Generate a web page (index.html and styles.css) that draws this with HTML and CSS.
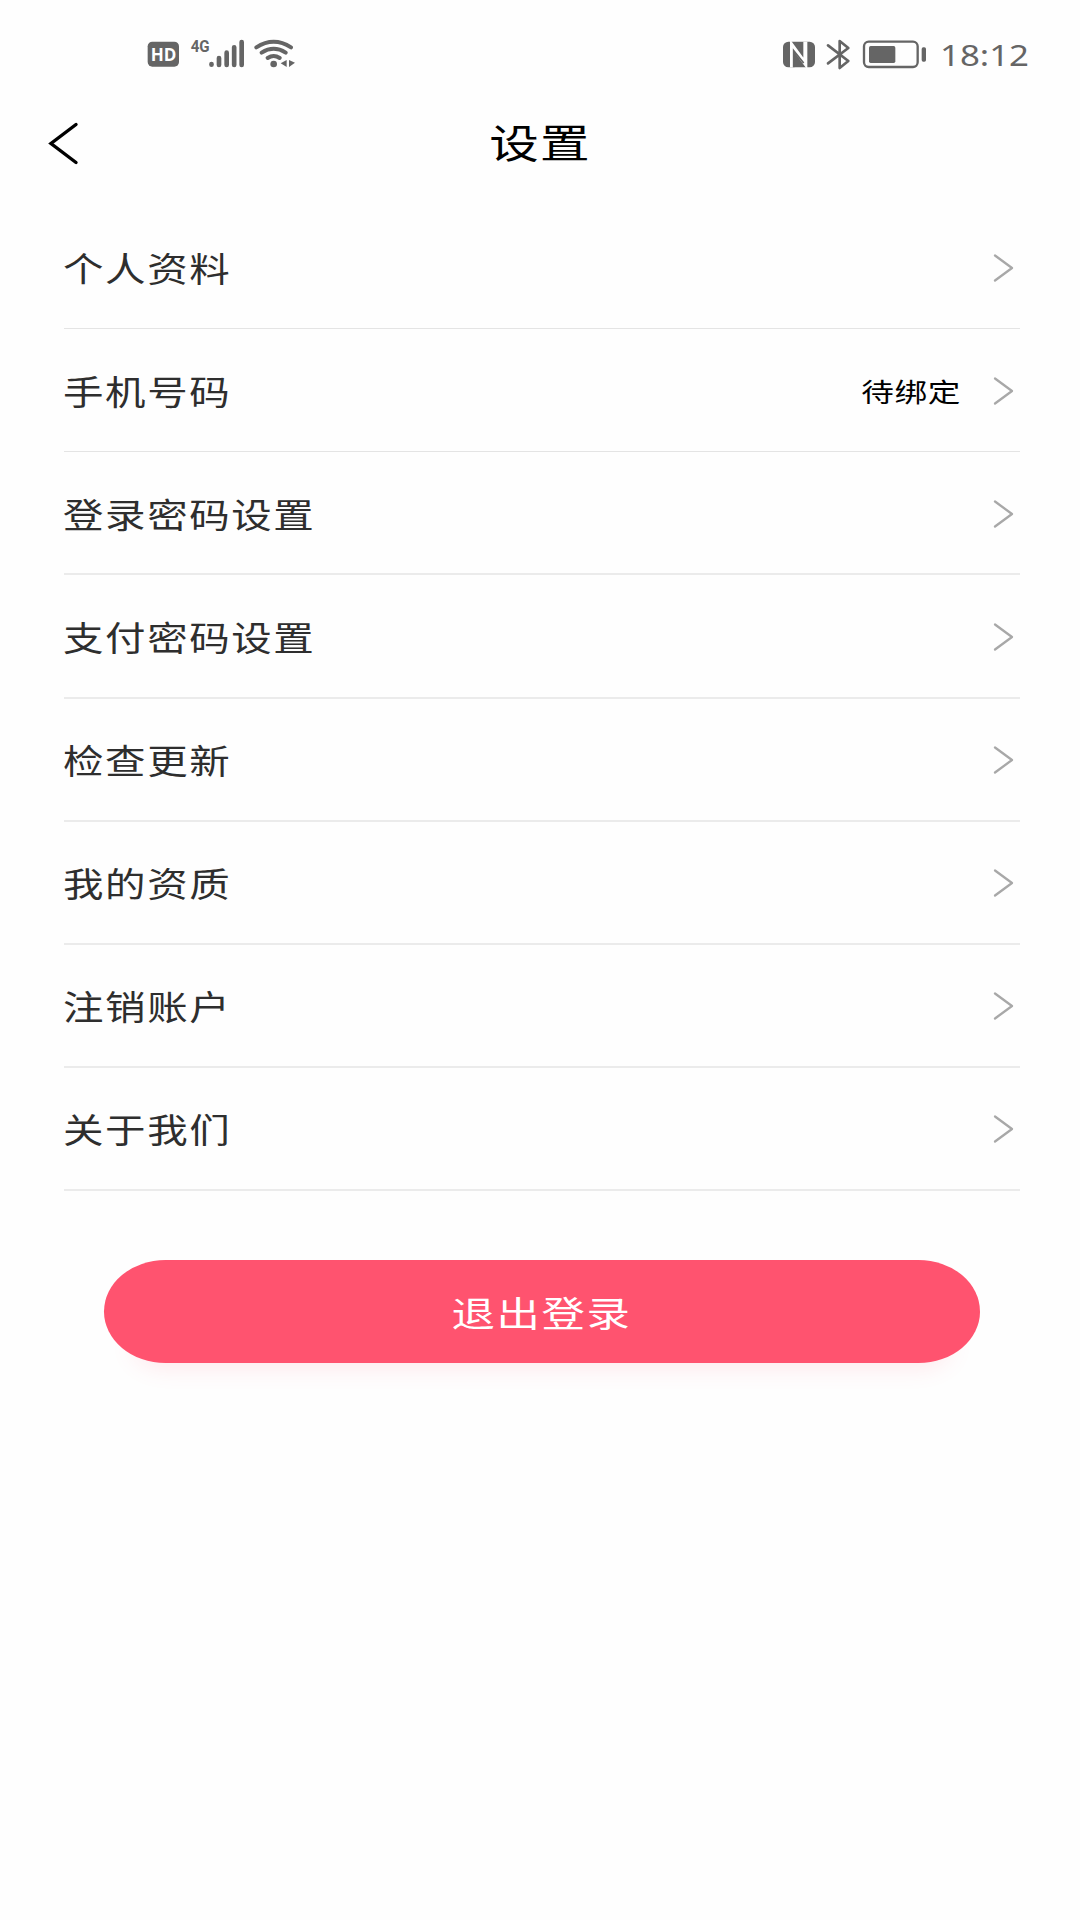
FILE: index.html
```html
<!DOCTYPE html>
<html lang="zh-CN">
<head>
<meta charset="utf-8">
<title>设置</title>
<link rel="stylesheet" href="styles.css">
</head>
<body>
<svg class="defs" width="0" height="0" aria-hidden="true">
  <symbol id="chevron" viewBox="0 0 22 30"><path d="M2 2.500L19 15L2 27.500" fill="none" stroke="#a8a8a8" stroke-width="2.300" stroke-linecap="round" stroke-linejoin="round"/></symbol>
</svg>
<div class="status">
  <svg class="status-left" viewBox="0 0 540 180">
    <rect x="53" y="50" width="94" height="75" rx="14"/>
    <text class="hd" x="62" y="107" textLength="77" lengthAdjust="spacingAndGlyphs">HD</text>
    <text class="net" x="182" y="82" textLength="57" lengthAdjust="spacingAndGlyphs">4G</text>
    <g class="line bars"><path d="M244.500 117V119M267 99V120M290 83V120M312.500 67V120M335 51V120"/></g>
    <g class="line waves"><path d="M379 67Q431 34 483 67M395 83Q431 60 467 83M413 99Q431 87 449 99"/></g>
    <circle cx="431" cy="117" r="10"/>
    <path d="M470 105V126L452 115ZM477 105V126L495 113Z"/>
  </svg>
  <div class="status-right">
    <svg class="status-icons" viewBox="0 0 480 180">
      <rect x="39" y="50" width="96" height="77" rx="16"/>
      <path class="nfc-outer" d="M66 127V61L106 116V50"/>
      <path class="nfc-inner" d="M71 127V77L101 114"/>
      <path class="line bt" d="M174 61L235 108L209 129V48L235 69L174 115"/>
      <rect class="line case" x="282" y="50" width="161" height="76" rx="14"/>
      <rect x="297" y="63" width="79" height="51" rx="5"/>
      <rect x="455" y="67" width="13" height="43" rx="5"/>
    </svg>
    <span class="time">18:12</span>
  </div>
</div>
<header class="header">
  <svg class="back" viewBox="0 0 32 44"><path d="M28 2.500L3 21.500L28 40.500" fill="none" stroke="#000" stroke-width="3.400" stroke-linecap="round" stroke-linejoin="miter"/></svg>
  <h1 class="title"><span>设置</span></h1>
</header>
<ul class="list">
  <li class="row"><span class="label">个人资料</span><svg class="arrow"><use href="#chevron"/></svg></li>
  <li class="row"><span class="label">手机号码</span><span class="value">待绑定</span><svg class="arrow"><use href="#chevron"/></svg></li>
  <li class="row"><span class="label">登录密码设置</span><svg class="arrow"><use href="#chevron"/></svg></li>
  <li class="row"><span class="label">支付密码设置</span><svg class="arrow"><use href="#chevron"/></svg></li>
  <li class="row"><span class="label">检查更新</span><svg class="arrow"><use href="#chevron"/></svg></li>
  <li class="row"><span class="label">我的资质</span><svg class="arrow"><use href="#chevron"/></svg></li>
  <li class="row"><span class="label">注销账户</span><svg class="arrow"><use href="#chevron"/></svg></li>
  <li class="row"><span class="label">关于我们</span><svg class="arrow"><use href="#chevron"/></svg></li>
</ul>
<button class="logout"><span>退出登录</span></button>
</body>
</html>
```
FILE: styles.css
```css
* { box-sizing: border-box; }

body {
  margin: 0;
  width: 1080px;
  height: 1920px;
  overflow: hidden;
  background: #fefefe;
  font-family: "Noto Sans CJK SC", sans-serif;
  display: flex;
  flex-direction: column;
}

.defs { display: block; flex: none; height: 0; }

.status {
  height: 85px;
  padding: 25px 50px 0 130px;
  display: flex;
  justify-content: space-between;
  fill: #656565;
}
.status-left { width: 180px; height: 60px; }
.status-right { display: flex; width: 260px; }
.status-icons { width: 160px; height: 60px; flex: none; }
.hd { font: 700 51px "Open Sans", sans-serif; fill: #fff; }
.net { font: 700 51px "Roboto", sans-serif; }
.line { fill: none; stroke: #656565; stroke-linecap: round; stroke-linejoin: round; }
.bars { stroke-width: 14px; }
.waves { stroke-width: 12px; }
.bt { stroke-width: 8px; }
.case { stroke-width: 7px; }
.nfc-outer { fill: none; stroke: #fefefe; stroke-width: 12px; }
.nfc-inner { fill: none; stroke: #656565; stroke-width: 5px; }
.time {
  margin-left: 10px;
  font: 400 29.5px/60px "Noto Sans", sans-serif;
  height: 60px;
  color: #656565;
  transform: scaleX(1.18);
  transform-origin: left;
}

.header {
  height: 121.3px;
  padding: 37px 48px 0;
  display: grid;
  grid-template-columns: 32px 1fr 32px;
  align-items: start;
}
.back { width: 32px; height: 44px; }
.title {
  margin: -3px 0 0;
  text-align: center;
  font-weight: 400;
  font-size: 40px;
  line-height: 44px;
  letter-spacing: 1px;
  color: #000;
}
.title span { display: inline-block; transform: scaleX(1.24); }

.list { list-style: none; margin: 0; padding: 0 60px 0 63px; }
.row {
  height: 123.07px;
  display: flex;
  align-items: center;
  border-bottom: 1px solid #e4e4e4;
  padding: 2px 5px 0 0;
  margin-left: 1px;
}
.row:nth-child(n+3) { border-bottom: 2px solid #ebebeb; }
.label {
  margin-left: -1px;
  margin-right: auto;
  font-size: 34px;
  line-height: 50px;
  letter-spacing: 1.35px;
  color: #2e2e2e;
  transform: scaleX(1.19);
  transform-origin: left;
}
.value {
  margin-right: 32px;
  font-size: 26.5px;
  line-height: 40px;
  letter-spacing: 0.5px;
  color: #000;
  transform: scaleX(1.23);
  transform-origin: right;
}
.arrow { width: 22px; height: 30px; }

.logout {
  margin: 69.14px 100px 0 104px;
  height: 103px;
  flex: none;
  padding: 0;
  border: 0;
  border-radius: 62px / 52px;
  background: #ff536f;
  box-shadow: 0 34px 24px -30px rgba(255, 83, 111, 0.14);
  font-family: inherit;
  font-size: 35px;
  letter-spacing: 1.3px;
  color: #fff;
}
.logout span { display: inline-block; transform: scaleX(1.24); }
```
